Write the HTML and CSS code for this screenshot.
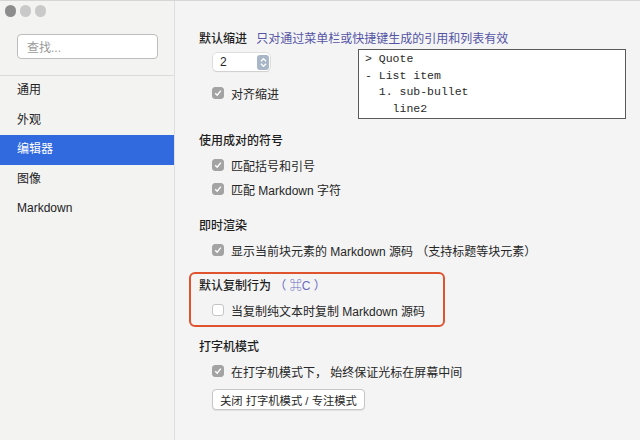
FILE: index.html
```html
<!DOCTYPE html>
<html lang="zh">
<head>
<meta charset="utf-8">
<link rel="stylesheet" href="styles.css">
</head>
<body>
<div class="window">
  <aside class="sidebar">
    <div class="lights">
      <span class="light dark"></span>
      <span class="light"></span>
      <span class="light"></span>
    </div>
    <div class="search"><span class="placeholder">查找...</span></div>
    <div class="divider"></div>
    <nav class="nav">
      <div class="nav-item">通用</div>
      <div class="nav-item">外观</div>
      <div class="nav-item active">编辑器</div>
      <div class="nav-item">图像</div>
      <div class="nav-item">Markdown</div>
    </nav>
  </aside>
  <main class="main">
    <section class="sec sec-indent">
      <div class="heading">默认缩进 <span class="hint">只对通过菜单栏或快捷键生成的引用和列表有效</span></div>
      <div class="indent-body">
        <div class="indent-left">
          <div class="select">
            <span class="select-val">2</span>
            <span class="stepper">
              <svg width="7" height="11" viewBox="0 0 7 11"><path d="M1 4.2 L3.5 1.6 L6 4.2" fill="none" stroke="#fff" stroke-width="1.3"/><path d="M1 6.8 L3.5 9.4 L6 6.8" fill="none" stroke="#fff" stroke-width="1.3"/></svg>
            </span>
          </div>
          <label class="check-row align-row"><span class="cb checked"><svg width="8" height="8" viewBox="0 0 8 8"><path d="M1.2 4.2 L3.2 6.2 L6.8 1.6" fill="none" stroke="#fff" stroke-width="1.4"/></svg></span>对齐缩进</label>
        </div>
        <pre class="code">&gt; Quote
- List item
  1. sub-bullet
    line2</pre>
      </div>
    </section>

    <section class="sec sec-pair">
      <div class="heading">使用成对的符号</div>
      <label class="check-row"><span class="cb checked"><svg width="8" height="8" viewBox="0 0 8 8"><path d="M1.2 4.2 L3.2 6.2 L6.8 1.6" fill="none" stroke="#fff" stroke-width="1.4"/></svg></span>匹配括号和引号</label>
      <label class="check-row"><span class="cb checked"><svg width="8" height="8" viewBox="0 0 8 8"><path d="M1.2 4.2 L3.2 6.2 L6.8 1.6" fill="none" stroke="#fff" stroke-width="1.4"/></svg></span>匹配 Markdown 字符</label>
    </section>

    <section class="sec sec-render">
      <div class="heading">即时渲染</div>
      <label class="check-row"><span class="cb checked"><svg width="8" height="8" viewBox="0 0 8 8"><path d="M1.2 4.2 L3.2 6.2 L6.8 1.6" fill="none" stroke="#fff" stroke-width="1.4"/></svg></span>显示当前块元素的 Markdown 源码 （支持标题等块元素）</label>
    </section>

    <section class="sec sec-copy">
      <div class="heading">默认复制行为 <span class="shortcut">（ ⌘C ）</span></div>
      <label class="check-row"><span class="cb"></span>当复制纯文本时复制 Markdown 源码</label>
    </section>

    <section class="sec sec-type">
      <div class="heading">打字机模式</div>
      <label class="check-row"><span class="cb checked"><svg width="8" height="8" viewBox="0 0 8 8"><path d="M1.2 4.2 L3.2 6.2 L6.8 1.6" fill="none" stroke="#fff" stroke-width="1.4"/></svg></span>在打字机模式下， 始终保证光标在屏幕中间</label>
      <button class="btn">关闭 打字机模式 / 专注模式</button>
    </section>
  </main>
</div>
</body>
</html>
```
FILE: styles.css
```css
* { box-sizing: border-box; }
html, body {
  margin: 0;
  padding: 0;
  width: 640px;
  height: 440px;
  overflow: hidden;
  background: #f4f4f4;
  font-family: "Liberation Sans", "Noto Sans CJK SC", sans-serif;
  font-size: 12px;
  color: #262626;
}
.window {
  display: flex;
  width: 640px;
  height: 440px;
  border-top: 1px solid #d6d6d6;
}
.sidebar {
  width: 175px;
  flex: none;
  background: #f3f3f2;
  border-right: 1px solid #dedede;
  display: flex;
  flex-direction: column;
}
.lights {
  display: flex;
  gap: 3.5px;
  padding: 4px 0 0 4.5px;
  height: 33px;
}
.light {
  width: 11.5px;
  height: 11.5px;
  border-radius: 50%;
  background: #c9c9c9;
}
.light.dark { background: #8d8d8d; }
.search {
  margin: 0 16px 0 17px;
  height: 25px;
  background: #fff;
  border: 1px solid #bdbdbd;
  border-radius: 4px;
  padding-left: 9px;
  display: flex;
  align-items: center;
}
.placeholder { color: #9a9a9a; font-size: 12px; }
.divider {
  margin-top: 16px;
  height: 1px;
  background: #dcdcdc;
}
.nav { padding-top: 0; }
.nav-item {
  height: 29.5px;
  line-height: 29.5px;
  padding-left: 17px;
  font-size: 12px;
  color: #222;
}
.nav-item.active {
  background: #3169df;
  color: #fff;
}
.main {
  flex: 1;
  padding: 26px 14px 0 14px;
  display: flex;
  flex-direction: column;
}
.sec { padding-left: 10px; }
.heading {
  height: 24px;
  line-height: 24px;
  font-weight: 500;
  color: #1e1e1e;
}
.hint {
  font-weight: 400;
  color: #5555a6;
  margin-left: 6px;
}
.indent-body {
  display: flex;
  justify-content: space-between;
  margin-top: -2px;
}
.indent-left { padding-left: 14px; padding-top: 4px; }
.select {
  width: 57px;
  height: 18px;
  background: #fff;
  border-radius: 4px;
  box-shadow: 0 0 0 0.5px #c8c8c8, 0 1px 1px rgba(0,0,0,0.12);
  display: flex;
  align-items: center;
  justify-content: space-between;
  padding: 0 1px 0 7px;
}
.select-val { font-size: 12px; }
.stepper {
  width: 12px;
  height: 15px;
  border-radius: 3px;
  background: #a9b6c8;
  display: flex;
  align-items: center;
  justify-content: center;
}
.check-row {
  display: flex;
  align-items: center;
  height: 24px;
  padding-left: 13px;
  color: #262626;
}
.align-row { margin-left: -14px; margin-top: 10px; }
.cb {
  width: 12px;
  height: 12px;
  border-radius: 3px;
  background: #fff;
  border: 1px solid #c4c4c4;
  margin-right: 7px;
  display: inline-flex;
  align-items: center;
  justify-content: center;
  flex: none;
}
.cb.checked {
  background: #a3a3a3;
  border-color: #a3a3a3;
}
.code {
  margin: 0;
  width: 268px;
  height: 70px;
  background: #fff;
  border: 1px solid #5a5a5a;
  padding: 1px 6px;
  font-family: "Liberation Mono", monospace;
  font-size: 11.5px;
  line-height: 16.5px;
  color: #2a2a2a;
  font-weight: 400;
}
.sec-pair { margin-top: 10px; }
.sec-render { margin-top: 13px; }
.sec-copy {
  margin-top: 10px;
  width: 256px;
  border: 2px solid #e0532f;
  border-radius: 6px;
  padding: 0 0 3px 8px;
}
.shortcut {
  font-weight: 400;
  color: #6a6ac4;
}
.sec-type { margin-top: 8px; }
.btn {
  margin: 6px 0 0 13px;
  height: 21px;
  padding: 0 7px;
  background: #fff;
  border: 1px solid #c6c6c6;
  border-radius: 4px;
  font-family: "Liberation Sans", "Noto Sans CJK SC", sans-serif;
  font-size: 11.3px;
  color: #262626;
  box-shadow: 0 1px 1px rgba(0,0,0,0.08);
}
```
